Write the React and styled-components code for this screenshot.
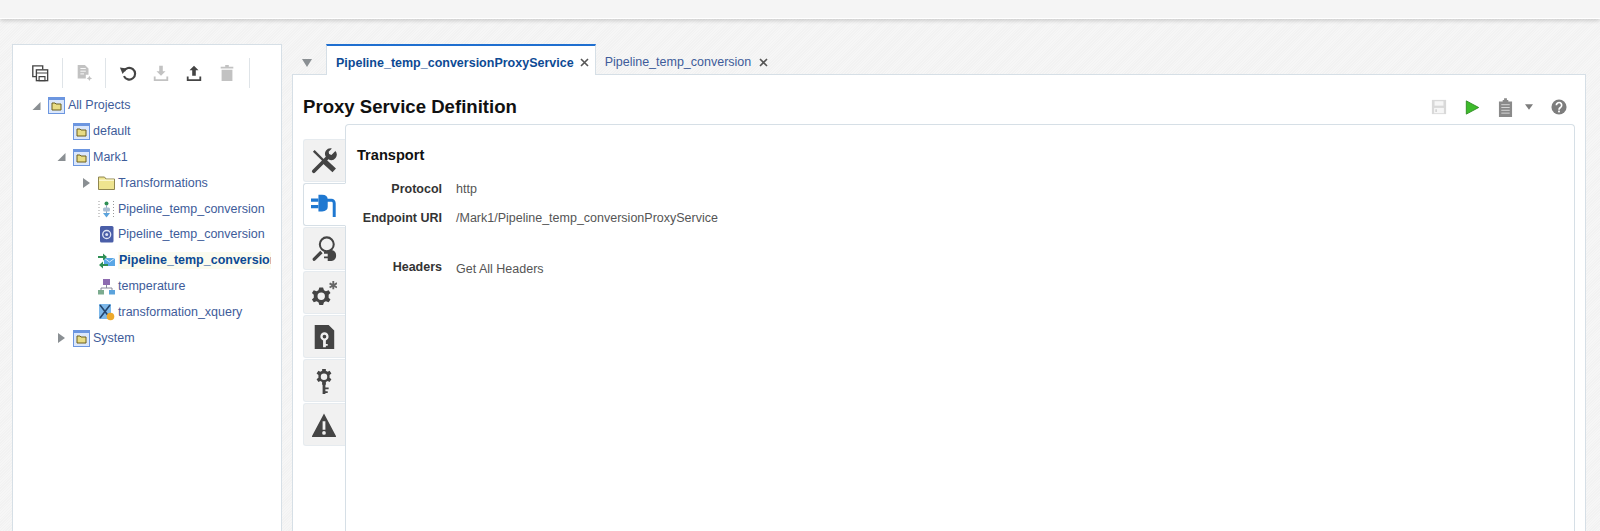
import React from "react";
import styled, {createGlobalStyle} from "styled-components";

const hatch = `repeating-linear-gradient(135deg, #f6f6f6 0 1px, #f2f2f2 1px 2px)`

const GlobalStyle = createGlobalStyle`
  html, body {
    margin: 0;
    padding: 0;
    height: 531px;
    overflow: hidden;
    background: #f4f4f4;
    font-family: "Liberation Sans", Arial, sans-serif;
    font-size: 12.5px;
  }
`

const Page = styled.div`
  height: 531px;
  display: flex;
  flex-direction: column;
  background: ${hatch};
`

const TopBar = styled.div`
  height: 18px;
  flex: none;
  background: #f5f5f5;
  border-bottom: 1px solid #fff;
  box-shadow: 0 2px 4px rgba(0, 0, 0, .16);
`

const Workspace = styled.div`
  flex: 1;
  min-height: 0;
  display: flex;
  gap: 10px;
  padding: 25px 14px 0 12px;
`

const Navigator = styled.aside`
  width: 270px;
  flex: none;
  box-sizing: border-box;
  background: #fff;
  border: 1px solid #d6dfe6;
  border-bottom: 0;
  padding: 13px 0 0 19px;
`

const Toolbar = styled.div`
  display: flex;
  align-items: center;
  height: 30px;
  margin: 0 0 5px -2px;
`

const ToolButton = styled.span`
  width: ${p => p.$w || 33}px;
  display: flex;
  justify-content: center;
  opacity: ${p => p.$off ? .32 : 1};
`

const ToolDivider = styled.span`
  width: 1px;
  height: 30px;
  background: #dfe4e8;
  margin: ${p => p.$m || "0 6px"};
`

const TreeRow = styled.div`
  height: 25.8px;
  display: flex;
  align-items: center;
  padding-left: ${p => p.$depth * 25}px;
  color: #3e5c9a;
  white-space: nowrap;
`

const Arrow = styled.svg`
  width: 9px;
  height: 12px;
  flex: none;
  margin-right: 7px;
  visibility: ${p => p.$none ? "hidden" : "visible"};
`

const NodeIcon = styled.svg`
  width: 17px;
  height: 17px;
  flex: none;
  margin-right: 3px;
`

const NodeLabel = styled.span`
  line-height: 17px;
`

const SelectedLabel = styled(NodeLabel)`
  width: 152px;
  overflow: hidden;
  background: #fbfbee;
  color: #0d4a94;
  font-weight: 700;
  padding-left: 1px;
`

const Editor = styled.main`
  flex: 1;
  min-width: 0;
  display: flex;
  flex-direction: column;
`

const TabStrip = styled.div`
  height: 30px;
  flex: none;
  display: flex;
  align-items: stretch;
  padding-left: 34px;
  position: relative;
`

const TabMenu = styled.svg`
  position: absolute;
  left: 10px;
  top: 15px;
  width: 10px;
  height: 8px;
`

const Tab = styled.div`
  display: flex;
  align-items: center;
  gap: 5px;
  box-sizing: border-box;
  padding: ${p => p.$active ? "4px 6px 0 9px" : "4px 0 0 9px"};
  color: ${p => p.$active ? "#0d4a94" : "#3e5c9a"};
  font-weight: ${p => p.$active ? 700 : 400};
  background: ${p => p.$active ? "#fff" : "transparent"};
  border-top: ${p => p.$active ? "2px solid #1f6fd0" : "2px solid transparent"};
  border-left: ${p => p.$active ? "1px solid #d6dfe6" : "0"};
  border-right: ${p => p.$active ? "1px solid #d6dfe6" : "0"};
  margin-bottom: ${p => p.$active ? "-1px" : "0"};
  z-index: 1;
`

const TabClose = styled.svg`
  width: 9px;
  height: 9px;
  flex: none;
  margin-left: ${p => p.$gap}px;
`

const Panel = styled.section`
  flex: 1;
  min-height: 0;
  display: flex;
  flex-direction: column;
  background: #fff;
  border: 1px solid #d6dfe6;
  border-bottom: 0;
  padding: 0 10px 0 10px;
`

const PanelHeader = styled.header`
  height: 49px;
  flex: none;
  display: flex;
  align-items: center;
  justify-content: space-between;
  padding-top: 15px;
  box-sizing: border-box;
`

const PanelTitle = styled.h1`
  margin: 0;
  font-size: 18.6px;
  font-weight: 700;
  color: #111;
`

const HeaderActions = styled.div`
  display: flex;
  align-items: center;
  gap: 18px;
  padding-right: 8px;
`

const ActionGroup = styled.span`
  display: flex;
  align-items: center;
  gap: 12px;
`

const Body = styled.div`
  flex: 1;
  min-height: 0;
  display: flex;
`

const SideTabs = styled.nav`
  width: 42px;
  flex: none;
  padding-top: 15px;
  display: flex;
  flex-direction: column;
  gap: 1px;
`

const SideTab = styled.div`
  height: 43px;
  box-sizing: border-box;
  display: flex;
  align-items: center;
  justify-content: center;
  padding-right: 2px;
  background: ${p => p.$active ? "#fff" : "#f1f1f1"};
  border: 1px solid ${p => p.$active ? "#d6dfe6" : "#e6ebef"};
  border-right: ${p => p.$active ? "1px solid #fff" : "0"};
  border-radius: 3px 0 0 3px;
  margin-right: ${p => p.$active ? "-1px" : "0"};
  position: relative;
  z-index: ${p => p.$active ? 1 : 0};
`

const Card = styled.div`
  flex: 1;
  min-width: 0;
  box-sizing: border-box;
  border: 1px solid #d6dfe6;
  border-bottom: 0;
  border-radius: 4px 4px 0 0;
  padding: 21px 11px;
  color: #333;
`

const SectionTitle = styled.h2`
  margin: 0 0 17px;
  font-size: 14.6px;
  line-height: 18px;
  font-weight: 700;
  color: #111;
`

const FieldRow = styled.div`
  display: grid;
  grid-template-columns: 85px 1fr;
  column-gap: 14px;
  height: 29px;
  line-height: 16px;
  margin-top: ${p => p.$gap || 0}px;
`

const FieldLabel = styled.span`
  text-align: right;
  font-weight: 700;
  color: #333;
  position: relative;
  top: ${p => p.$lift ? -2 : 0}px;
`

const FieldValue = styled.span`
  color: #555;
`

const FolderBox = () => (
  <NodeIcon viewBox="0 0 17 17">
    <rect x=".5" y=".5" width="16" height="16" fill="#dbe7fb" stroke="#6c96e0"/>
    <rect x="1" y="1" width="15" height="2" fill="#6c96e0"/>
    <path d="M4 6h3l1 1h5v6H4z" fill="#e8dc84" stroke="#6b5f20"/>
  </NodeIcon>
)

const FolderIcon = () => (
  <NodeIcon viewBox="0 0 17 17">
    <path d="M.5 14.500V2h6l1.500 2h8.500v10.500z" fill="#eee48f" stroke="#8f8650"/>
    <rect x="1" y="4.500" width="15" height="1.500" fill="#faf6cc"/>
  </NodeIcon>
)

const PipelineIcon = () => (
  <NodeIcon viewBox="0 0 17 17">
    <path d="M1 0v17M15.500 0v17" stroke="#999" strokeDasharray="1 2" fill="none"/>
    <circle cx="8.500" cy="2.500" r="2" fill="#2f8f55"/>
    <path d="M8.500 4v9" stroke="#8fa6c0"/>
    <rect x="5" y="6.500" width="7" height="4" rx="1.500" fill="#a9bdd3"/>
    <path d="M5 12h7l-3.500 4.500z" fill="#5ba3dc"/>
  </NodeIcon>
)

const WsdlIcon = () => (
  <NodeIcon viewBox="0 0 17 17">
    <rect x="2" y="0" width="13.500" height="16.500" rx="1.500" fill="#4a5ea8"/>
    <circle cx="8.700" cy="8.500" r="4" fill="none" stroke="#dfe5f5" strokeWidth="1.300"/>
    <circle cx="8.700" cy="8.500" r="1.500" fill="#dfe5f5"/>
  </NodeIcon>
)

const ProxyIcon = () => (
  <NodeIcon viewBox="0 0 17 17">
    <rect x="6" y="6" width="11" height="8" fill="#5aa7e6"/>
    <path d="M6 6l5.500 4L17 6" fill="none" stroke="#d7ebfb"/>
    <path d="M0 4h5V1.500L9 5 5 8.500V6H0zM10 12H5V9.500L1 13l4 3.500V14h5z" fill="#2f8f55"/>
  </NodeIcon>
)

const SchemaIcon = () => (
  <NodeIcon viewBox="0 0 17 17">
    <rect x="5" y="1" width="7" height="6" fill="#8d6bb0"/>
    <path d="M8.500 7v3M3 12v-2h11v2" fill="none" stroke="#889"/>
    <rect x="0" y="12" width="6" height="4.500" fill="#7cab8f"/>
    <rect x="11" y="12" width="6" height="4.500" fill="#5ba3dc"/>
  </NodeIcon>
)

const XqueryIcon = () => (
  <NodeIcon viewBox="0 0 17 17">
    <rect x="1" y="0" width="12" height="15" fill="#7db8ea"/>
    <path d="M2 1l10 13M12 1L2 14" stroke="#25466e" strokeWidth="1.600"/>
    <circle cx="12.500" cy="12.500" r="3.800" fill="#eda92c"/>
  </NodeIcon>
)

const TreeArrow = ({open, none}) => (
  <Arrow viewBox="0 0 9 12" $none={none}>
    {open ? <path d="M8.500 2v8H.5z" fill="#8a8f93"/> : <path d="M1 1l7 5-7 5z" fill="#8a8f93"/>}
  </Arrow>
)

const treeItems = [
  {depth: 0, arrow: "open", icon: <FolderBox/>, label: "All Projects"},
  {depth: 1, arrow: "none", icon: <FolderBox/>, label: "default"},
  {depth: 1, arrow: "open", icon: <FolderBox/>, label: "Mark1"},
  {depth: 2, arrow: "closed", icon: <FolderIcon/>, label: "Transformations"},
  {depth: 2, arrow: "none", icon: <PipelineIcon/>, label: "Pipeline_temp_conversion"},
  {depth: 2, arrow: "none", icon: <WsdlIcon/>, label: "Pipeline_temp_conversion"},
  {depth: 2, arrow: "none", icon: <ProxyIcon/>, label: "Pipeline_temp_conversion", selected: true},
  {depth: 2, arrow: "none", icon: <SchemaIcon/>, label: "temperature"},
  {depth: 2, arrow: "none", icon: <XqueryIcon/>, label: "transformation_xquery"},
  {depth: 1, arrow: "closed", icon: <FolderBox/>, label: "System"},
]

const Close = ({gap}) => (
  <TabClose viewBox="0 0 9 9" $gap={gap}>
    <path d="M1 1l7 7M8 1L1 8" stroke="#555" strokeWidth="1.600"/>
  </TabClose>
)

const ToolIcon = ({children}) => (
  <svg width="18" height="18" viewBox="0 0 20 20" fill="#444">{children}</svg>
)

const SideIcon = ({children}) => (
  <svg width="26" height="26" viewBox="0 0 28 28" fill="#444">{children}</svg>
)

export default function App() {
  return (
    <Page>
      <GlobalStyle/>
      <TopBar/>
      <Workspace>
        <Navigator>
          <Toolbar>
            <ToolButton $w={20}>
              <ToolIcon>
                <path d="M6 14H2V2h11v4" fill="none" stroke="#444" strokeWidth="1.500"/>
                <rect x="6" y="6.500" width="12.500" height="12" fill="none" stroke="#444" strokeWidth="1.500"/>
                <path d="M6 10h12.500M9 14h6.500v4.500H9z" fill="none" stroke="#444" strokeWidth="1.300"/>
              </ToolIcon>
            </ToolButton>
            <ToolDivider $m="0 11px 0 12px"/>
            <ToolButton $w={20} $off>
              <ToolIcon>
                <path d="M3 1h8l4 4v7h-3v4H3z"/>
                <path d="M6 5h6M6 8h6M6 11h4" stroke="#fff"/>
                <path d="M16 13l1 2 2 1-2 1-1 2-1-2-2-1 2-1z"/>
              </ToolIcon>
            </ToolButton>
            <ToolDivider $m="0 11px 0 11px"/>
            <ToolButton $w={21}>
              <ToolIcon>
                <path d="M5.500 8a6.500 6.500 0 1 1 0 5.500" fill="none" stroke="#444" strokeWidth="2.400"/>
                <path d="M1 4l7.500 1L4 11z"/>
              </ToolIcon>
            </ToolButton>
            <ToolButton $w={45} $off>
              <ToolIcon>
                <path d="M8 2h4v6h3l-5 5-5-5h3zM2 14h2v3h12v-3h2v5H2z"/>
              </ToolIcon>
            </ToolButton>
            <ToolButton $w={21}>
              <ToolIcon>
                <path d="M8 13h4V7h3l-5-5-5 5h3zM2 14h2v3h12v-3h2v5H2z"/>
              </ToolIcon>
            </ToolButton>
            <ToolButton $w={45} $off>
              <ToolIcon>
                <path d="M8 1h4v2h5v2H3V3h5zM4 6.500h12V19H4z"/>
              </ToolIcon>
            </ToolButton>
            <ToolDivider $m="0"/>
          </Toolbar>
          {treeItems.map((item, i) => (
            <TreeRow key={i} $depth={item.depth}>
              <TreeArrow open={item.arrow === "open"} none={item.arrow === "none"}/>
              {item.icon}
              {item.selected
                ? <SelectedLabel>{item.label}</SelectedLabel>
                : <NodeLabel>{item.label}</NodeLabel>}
            </TreeRow>
          ))}
        </Navigator>
        <Editor>
          <TabStrip>
            <TabMenu viewBox="0 0 10 8"><path d="M0 0h10L5 8z" fill="#8a8f93"/></TabMenu>
            <Tab $active>Pipeline_temp_conversionProxyService <Close gap={1}/></Tab>
            <Tab>Pipeline_temp_conversion <Close gap={3}/></Tab>
          </TabStrip>
          <Panel>
            <PanelHeader>
              <PanelTitle>Proxy Service Definition</PanelTitle>
              <HeaderActions>
                <svg width="16" height="16" viewBox="0 0 18 18">
                  <path d="M1 1h16v16H1z" fill="#d9d9d9"/>
                  <path d="M4 2.500h10v5H4z" fill="#f6f6f6"/>
                  <path d="M3.500 10h11v6h-11z" fill="#f6f6f6"/>
                  <path d="M5 11.500h1.500v3H5z" fill="#ccc"/>
                </svg>
                <svg width="15" height="15" viewBox="0 0 16 17">
                  <path d="M1 1l14 7.500L1 16z" fill="#3dbb2b" stroke="#2a8a1e"/>
                </svg>
                <ActionGroup>
                  <svg width="15" height="19" viewBox="0 0 16 20">
                    <path d="M5 2h1.500V0h3v2H11v1.500h4V20H1V3.500h4z" fill="#8a8a8a"/>
                    <path d="M3.500 7h9M3.500 10h9M3.500 13h9M3.500 16h9" stroke="#d9d9d9"/>
                  </svg>
                  <svg width="8" height="6" viewBox="0 0 10 7"><path d="M0 0h10L5 7z" fill="#7d7d7d"/></svg>
                </ActionGroup>
                <svg width="16" height="16" viewBox="0 0 18 18">
                  <circle cx="9" cy="9" r="8.500" fill="#7d7d7d"/>
                  <path d="M6 7a3 3 0 1 1 4.600 2.500c-1 .7-1.600 1.200-1.600 2.500" fill="none" stroke="#fff" strokeWidth="1.900"/>
                  <rect x="8" y="13" width="2" height="2" fill="#fff"/>
                </svg>
              </HeaderActions>
            </PanelHeader>
            <Body>
              <SideTabs>
                <SideTab>
                  <SideIcon>
                    <path d="M3 3l11 11" stroke="#444" strokeWidth="2.600" fill="none"/>
                    <path d="M14 14l11 10" stroke="#444" strokeWidth="5.500" fill="none"/>
                    <path d="M3 25L17 11" stroke="#444" strokeWidth="4" strokeLinecap="round" fill="none"/>
                    <path d="M26 3.500l-4 4-2.500-1-.5-2.500 3.500-3.500a6 6 0 0 0-6.500 9l3 3a6 6 0 0 0 7-9.500z"/>
                  </SideIcon>
                </SideTab>
                <SideTab $active>
                  <SideIcon>
                    <path d="M0 7h8v3.500H0zM0 14h8v3.500H0z" fill="#1f78d1"/>
                    <path d="M8 3h4c4 0 6 2 6 5v8c0 3-2 5-6 5H8z" fill="#1f78d1"/>
                    <path d="M17 9h5a3 3 0 0 1 3 3v15" fill="none" stroke="#1f78d1" strokeWidth="3.200"/>
                  </SideIcon>
                </SideTab>
                <SideTab>
                  <SideIcon>
                    <circle cx="17" cy="9" r="7.500" fill="none" stroke="#444" strokeWidth="2.200"/>
                    <path d="M2 24l8-8 2.500 2.500-8 8a1.800 1.800 0 0 1-2.500-2.500z"/>
                    <path d="M18 15h4a5.500 5.500 0 0 1 5 6 5.500 5.500 0 0 1-5 6h-4v-3h-4v-2h4v-3h-4v-2h4z"/>
                  </SideIcon>
                </SideTab>
                <SideTab>
                  <SideIcon>
                    <path fillRule="evenodd" d="M9 8h4l1 3 2 1 3-1 2 3-2 2v3l2 2-2 3-3-1-2 1-1 3H9l-1-3-2-1-3 1-2-3 2-2v-3l-2-2 2-3 3 1 2-1zM11 13.500a4 4 0 1 0 0 8 4 4 0 0 0 0-8z"/>
                    <path fill="#666" d="M23 1h2v3l2.500-1.500 1 1.700L26 6l2.500 1.300-1 1.700L25 7.500V10h-2V7.500L20.500 9l-1-1.700L22 6l-2.500-1.500 1-1.700L23 4z"/>
                  </SideIcon>
                </SideTab>
                <SideTab>
                  <SideIcon>
                    <path fillRule="evenodd" d="M4 1h15l6 6v20H4zM14.500 9a4.500 4.500 0 0 0-1.500 8.700V25h3v-1.500h2v-2h-2v-3.800A4.500 4.500 0 0 0 14.500 9zm0 2.500a2 2 0 1 1 0 4 2 2 0 0 1 0-4z"/>
                  </SideIcon>
                </SideTab>
                <SideTab>
                  <SideIcon>
                    <path fillRule="evenodd" d="M12 1h4v2l2 1 2-1 2 3-2 1.500v3L22 12l-2 3-2-1-2 1v3h-4v-3l-2-1-2 1-2-3 2-1.500v-3L6 6l2-3 2 1 2-1zM14 6a3.500 3.500 0 1 0 0 7 3.500 3.500 0 0 0 0-7z"/>
                    <path d="M12.500 16h3v12h-3zM15 21h4v2h-4zM15 25h3v2h-3z"/>
                  </SideIcon>
                </SideTab>
                <SideTab>
                  <SideIcon>
                    <path fillRule="evenodd" d="M14 1.500L27 26a1 1 0 0 1-1 1H2a1 1 0 0 1-1-1zM12.500 10v9h3v-9zM14 20.500a2 2 0 1 0 0 4 2 2 0 0 0 0-4z"/>
                  </SideIcon>
                </SideTab>
              </SideTabs>
              <Card>
                <SectionTitle>Transport</SectionTitle>
                <FieldRow>
                  <FieldLabel>Protocol</FieldLabel>
                  <FieldValue>http</FieldValue>
                </FieldRow>
                <FieldRow>
                  <FieldLabel>Endpoint URI</FieldLabel>
                  <FieldValue>/Mark1/Pipeline_temp_conversionProxyService</FieldValue>
                </FieldRow>
                <FieldRow $gap={22}>
                  <FieldLabel $lift>Headers</FieldLabel>
                  <FieldValue>Get All Headers</FieldValue>
                </FieldRow>
              </Card>
            </Body>
          </Panel>
        </Editor>
      </Workspace>
    </Page>
  )
}
